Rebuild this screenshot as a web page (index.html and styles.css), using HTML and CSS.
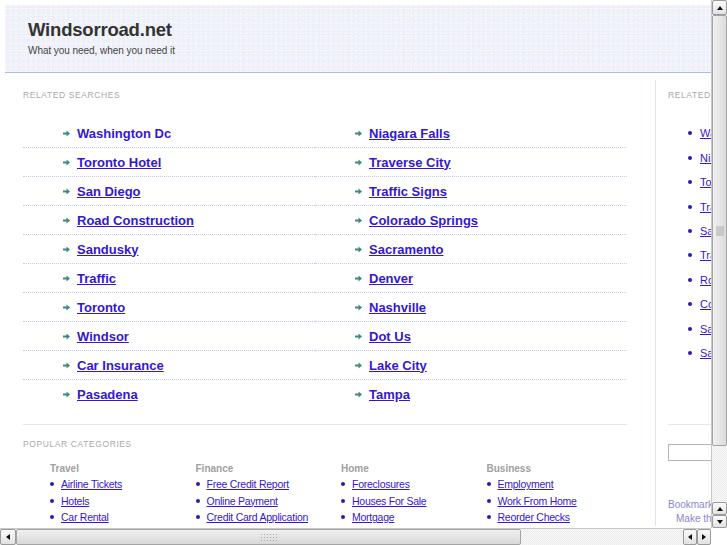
FILE: index.html
```html
<!DOCTYPE html>
<html>
<head>
<meta charset="utf-8">
<title>Windsorroad.net</title>
<link rel="stylesheet" href="styles.css">
</head>
<body>
<div class="window">
  <div class="viewport">
    <div class="page">
      <div class="header">
        <div class="title">Windsorroad.net</div>
        <div class="tagline">What you need, when you need it</div>
      </div>
      <div class="content">
        <div class="main">
          <div class="section-title">RELATED SEARCHES</div>
          <div class="results">
            <div class="item"><span class="arrow"><svg width="7" height="7" viewBox="0 0 7 7"><path d="M0 2.5h3.5V0.5L7 3.5 3.5 6.5V4.5H0z" fill="#3b8a7c"/></svg></span><a class="hov">Washington Dc</a></div>
            <div class="item"><span class="arrow"><svg width="7" height="7" viewBox="0 0 7 7"><path d="M0 2.5h3.5V0.5L7 3.5 3.5 6.5V4.5H0z" fill="#3b8a7c"/></svg></span><a>Niagara Falls</a></div>
            <div class="item"><span class="arrow"><svg width="7" height="7" viewBox="0 0 7 7"><path d="M0 2.5h3.5V0.5L7 3.5 3.5 6.5V4.5H0z" fill="#3b8a7c"/></svg></span><a>Toronto Hotel</a></div>
            <div class="item"><span class="arrow"><svg width="7" height="7" viewBox="0 0 7 7"><path d="M0 2.5h3.5V0.5L7 3.5 3.5 6.5V4.5H0z" fill="#3b8a7c"/></svg></span><a>Traverse City</a></div>
            <div class="item"><span class="arrow"><svg width="7" height="7" viewBox="0 0 7 7"><path d="M0 2.5h3.5V0.5L7 3.5 3.5 6.5V4.5H0z" fill="#3b8a7c"/></svg></span><a>San Diego</a></div>
            <div class="item"><span class="arrow"><svg width="7" height="7" viewBox="0 0 7 7"><path d="M0 2.5h3.5V0.5L7 3.5 3.5 6.5V4.5H0z" fill="#3b8a7c"/></svg></span><a>Traffic Signs</a></div>
            <div class="item"><span class="arrow"><svg width="7" height="7" viewBox="0 0 7 7"><path d="M0 2.5h3.5V0.5L7 3.5 3.5 6.5V4.5H0z" fill="#3b8a7c"/></svg></span><a>Road Construction</a></div>
            <div class="item"><span class="arrow"><svg width="7" height="7" viewBox="0 0 7 7"><path d="M0 2.5h3.5V0.5L7 3.5 3.5 6.5V4.5H0z" fill="#3b8a7c"/></svg></span><a>Colorado Springs</a></div>
            <div class="item"><span class="arrow"><svg width="7" height="7" viewBox="0 0 7 7"><path d="M0 2.5h3.5V0.5L7 3.5 3.5 6.5V4.5H0z" fill="#3b8a7c"/></svg></span><a>Sandusky</a></div>
            <div class="item"><span class="arrow"><svg width="7" height="7" viewBox="0 0 7 7"><path d="M0 2.5h3.5V0.5L7 3.5 3.5 6.5V4.5H0z" fill="#3b8a7c"/></svg></span><a>Sacramento</a></div>
            <div class="item"><span class="arrow"><svg width="7" height="7" viewBox="0 0 7 7"><path d="M0 2.5h3.5V0.5L7 3.5 3.5 6.5V4.5H0z" fill="#3b8a7c"/></svg></span><a>Traffic</a></div>
            <div class="item"><span class="arrow"><svg width="7" height="7" viewBox="0 0 7 7"><path d="M0 2.5h3.5V0.5L7 3.5 3.5 6.5V4.5H0z" fill="#3b8a7c"/></svg></span><a>Denver</a></div>
            <div class="item"><span class="arrow"><svg width="7" height="7" viewBox="0 0 7 7"><path d="M0 2.5h3.5V0.5L7 3.5 3.5 6.5V4.5H0z" fill="#3b8a7c"/></svg></span><a>Toronto</a></div>
            <div class="item"><span class="arrow"><svg width="7" height="7" viewBox="0 0 7 7"><path d="M0 2.5h3.5V0.5L7 3.5 3.5 6.5V4.5H0z" fill="#3b8a7c"/></svg></span><a>Nashville</a></div>
            <div class="item"><span class="arrow"><svg width="7" height="7" viewBox="0 0 7 7"><path d="M0 2.5h3.5V0.5L7 3.5 3.5 6.5V4.5H0z" fill="#3b8a7c"/></svg></span><a>Windsor</a></div>
            <div class="item"><span class="arrow"><svg width="7" height="7" viewBox="0 0 7 7"><path d="M0 2.5h3.5V0.5L7 3.5 3.5 6.5V4.5H0z" fill="#3b8a7c"/></svg></span><a>Dot Us</a></div>
            <div class="item"><span class="arrow"><svg width="7" height="7" viewBox="0 0 7 7"><path d="M0 2.5h3.5V0.5L7 3.5 3.5 6.5V4.5H0z" fill="#3b8a7c"/></svg></span><a>Car Insurance</a></div>
            <div class="item"><span class="arrow"><svg width="7" height="7" viewBox="0 0 7 7"><path d="M0 2.5h3.5V0.5L7 3.5 3.5 6.5V4.5H0z" fill="#3b8a7c"/></svg></span><a>Lake City</a></div>
            <div class="item last"><span class="arrow"><svg width="7" height="7" viewBox="0 0 7 7"><path d="M0 2.5h3.5V0.5L7 3.5 3.5 6.5V4.5H0z" fill="#3b8a7c"/></svg></span><a>Pasadena</a></div>
            <div class="item last"><span class="arrow"><svg width="7" height="7" viewBox="0 0 7 7"><path d="M0 2.5h3.5V0.5L7 3.5 3.5 6.5V4.5H0z" fill="#3b8a7c"/></svg></span><a>Tampa</a></div>
          </div>
          <div class="rule"></div>
          <div class="section-title popular">POPULAR CATEGORIES</div>
          <div class="cats">
            <div class="cat">
              <div class="cat-title">Travel</div>
              <ul class="dots">
                <li><a>Airline Tickets</a></li>
                <li><a>Hotels</a></li>
                <li><a>Car Rental</a></li>
              </ul>
            </div>
            <div class="cat">
              <div class="cat-title">Finance</div>
              <ul class="dots">
                <li><a>Free Credit Report</a></li>
                <li><a>Online Payment</a></li>
                <li><a>Credit Card Application</a></li>
              </ul>
            </div>
            <div class="cat">
              <div class="cat-title">Home</div>
              <ul class="dots">
                <li><a>Foreclosures</a></li>
                <li><a>Houses For Sale</a></li>
                <li><a>Mortgage</a></li>
              </ul>
            </div>
            <div class="cat">
              <div class="cat-title">Business</div>
              <ul class="dots">
                <li><a>Employment</a></li>
                <li><a>Work From Home</a></li>
                <li><a>Reorder Checks</a></li>
              </ul>
            </div>
          </div>
        </div>
        <div class="side">
          <div class="section-title">RELATED SEARCHES</div>
          <ul class="side-list">
            <li><a>Washington Dc</a></li>
            <li><a>Niagara Falls</a></li>
            <li><a>Toronto Hotel</a></li>
            <li><a>Traverse City</a></li>
            <li><a>San Diego</a></li>
            <li><a>Traffic Signs</a></li>
            <li><a>Road Construction</a></li>
            <li><a>Colorado Springs</a></li>
            <li><a>Sandusky</a></li>
            <li><a>Sacramento</a></li>
          </ul>
          <div class="side-rule"></div>
          <input class="search" type="text">
          <div class="bookmark first">Bookmark this page</div>
          <div class="bookmark indent">Make this your homepage</div>
        </div>
      </div>
    </div>
  </div>
  <div class="vscroll">
    <div class="btn up top"></div>
    <div class="vthumb"><span class="grip"></span></div>
    <div class="trough"></div>
    <div class="btn up"></div>
    <div class="btn down"></div>
  </div>
  <div class="hscroll">
    <div class="btn left first"></div>
    <div class="hthumb"><span class="hgrip"></span></div>
    <div class="trough"></div>
    <div class="btn left"></div>
    <div class="btn right"></div>
  </div>
  <div class="corner"></div>
</div>
</body>
</html>
```
FILE: styles.css
```css
html, body {
  margin: 0;
  padding: 0;
  background: #ffffff;
}

body {
  font-family: "Liberation Sans", Arial, sans-serif;
  overflow: hidden;
}

.window {
  width: 727px;
  height: 545px;
  display: grid;
  grid-template-columns: 711px 16px;
  grid-template-rows: 528px 17px;
}

.viewport {
  overflow: hidden;
  background: #fff;
}

.page {
  width: 900px;
  padding: 5px 0 0 5px;
}

.header {
  height: 68px;
  box-sizing: border-box;
  padding: 14px 0 0 23px;
  background-color: #edf0f8;
  background-image:
    radial-gradient(circle at 20% 30%, rgba(255,255,255,0.7) 0.5px, transparent 0.9px),
    radial-gradient(circle at 60% 70%, rgba(255,255,255,0.6) 0.5px, transparent 0.9px),
    radial-gradient(circle at 40% 50%, rgba(255,255,255,0.6) 0.5px, transparent 0.9px);
  background-size: 5px 3px, 7px 5px, 3px 7px;
  border-bottom: 1px solid #a9bde8;
}

.title {
  font-size: 18.5px;
  font-weight: bold;
  line-height: 22px;
  color: #333333;
  letter-spacing: -0.2px;
}

.tagline {
  margin-top: 3px;
  font-size: 10px;
  line-height: 14px;
  color: #444444;
  letter-spacing: -0.05px;
}

.content {
  display: flex;
  margin-top: 7px;
}

.main {
  width: 650px;
  box-sizing: border-box;
  padding: 9px 28px 0 18px;
  flex: none;
}

.section-title {
  font-size: 8.5px;
  line-height: 12px;
  letter-spacing: 0.6px;
  color: #a8a8a8;
}

.results {
  display: grid;
  grid-template-columns: 292px 312px;
  margin-top: 18px;
}

.item {
  height: 28px;
  display: flex;
  align-items: center;
  padding-left: 40px;
  border-bottom: 1px dotted #c3d0ec;
}

.item.last {
  border-bottom: none;
}

.arrow {
  width: 7px;
  height: 7px;
  display: flex;
  margin-right: 7px;
}

a {
  color: #3318d0;
  text-decoration: underline;
}

.item a {
  font-size: 13px;
  font-weight: bold;
  letter-spacing: 0;
}

.item a.hov {
  text-decoration: none;
}

.rule {
  height: 1px;
  background: #e4e6f0;
  margin-top: 16px;
}

.popular {
  margin-top: 13px;
}

.cats {
  display: grid;
  grid-template-columns: repeat(4, 145.5px);
  padding-left: 27px;
  margin-top: 13px;
}

.cat-title {
  font-size: 10px;
  font-weight: bold;
  line-height: 12px;
  color: #a0a0a0;
}

.dots {
  list-style: none;
  margin: 1px 0 0 0;
  padding: 0;
}

.dots li {
  height: 16.5px;
  display: flex;
  align-items: center;
}

.dots li::before,
.side-list li::before {
  content: "";
  width: 4px;
  height: 4px;
  border-radius: 50%;
  background: #2a1ab8;
  flex: none;
}

.dots li::before {
  margin-right: 7px;
}

.dots a {
  font-size: 10.5px;
  letter-spacing: -0.25px;
}

.side {
  flex: none;
  width: 220px;
  border-left: 1px solid #dde4f4;
  padding: 9px 0 0 12px;
}

.side-list {
  list-style: none;
  margin: 20px 0 0 0;
  padding: 0 0 0 20px;
}

.side-list li {
  height: 24.45px;
  display: flex;
  align-items: center;
}

.side-list li::before {
  margin-right: 8px;
}

.side-list a {
  font-size: 11px;
}

.side-rule {
  height: 1px;
  background: #e4e6f0;
  margin-top: 59px;
}

.search {
  display: block;
  margin-top: 19px;
  width: 120px;
  height: 17px;
  box-sizing: border-box;
  border: 1px solid #b4b4b4;
  padding: 0;
}

.bookmark {
  font-size: 10px;
  line-height: 14px;
  color: #8a86d0;
}

.bookmark.first {
  margin-top: 37px;
}

.bookmark.indent {
  padding-left: 8px;
}

/* Scrollbars */
.vscroll {
  display: flex;
  flex-direction: column;
  background: #f2f2f2;
  border-left: 1px solid #c8c8c8;
  box-sizing: border-box;
}

.hscroll {
  display: flex;
  background: #f2f2f2;
  border-top: 1px solid #c8c8c8;
  box-sizing: border-box;
}

.corner {
  background: #ffffff;
}

.trough {
  flex: 1;
  background-color: #ececec;
  background-image:
    linear-gradient(45deg, #f8f8f8 25%, transparent 25%, transparent 75%, #f8f8f8 75%),
    linear-gradient(45deg, #f8f8f8 25%, transparent 25%, transparent 75%, #f8f8f8 75%);
  background-size: 2px 2px;
  background-position: 0 0, 1px 1px;
}

.btn {
  flex: none;
  box-sizing: border-box;
  border: 1px solid #9a9a9a;
  border-radius: 2px;
  background: linear-gradient(#fbfbfb, #e2e2e2);
  display: flex;
  align-items: center;
  justify-content: center;
}

.vscroll .btn {
  height: 13px;
  width: 15px;
}

.vscroll .btn.top {
  height: 15px;
}

.hscroll .btn {
  width: 14px;
  height: 16px;
}

.hscroll .btn.first {
  width: 16px;
}

.btn::after {
  content: "";
  width: 0;
  height: 0;
}

.btn.up::after {
  border-left: 3px solid transparent;
  border-right: 3px solid transparent;
  border-bottom: 4px solid #111;
}

.btn.down::after {
  border-left: 3px solid transparent;
  border-right: 3px solid transparent;
  border-top: 4px solid #111;
}

.btn.left::after {
  border-top: 3px solid transparent;
  border-bottom: 3px solid transparent;
  border-right: 4px solid #111;
}

.btn.right::after {
  border-top: 3px solid transparent;
  border-bottom: 3px solid transparent;
  border-left: 4px solid #111;
}

.vthumb {
  flex: none;
  height: 431px;
  box-sizing: border-box;
  border: 1px solid #a4a4a4;
  border-radius: 2px;
  background: linear-gradient(90deg, #f0f0f0, #dcdcdc);
  display: flex;
  justify-content: center;
  align-items: center;
}

.grip {
  width: 8px;
  height: 10px;
  background-image: radial-gradient(circle, #a8a8a8 0.6px, transparent 0.8px);
  background-size: 2px 2px;
}

.hthumb {
  flex: none;
  width: 505px;
  box-sizing: border-box;
  border: 1px solid #a4a4a4;
  border-radius: 2px;
  background: linear-gradient(#f0f0f0, #d8d8d8);
  display: flex;
  justify-content: center;
  align-items: center;
}

.hgrip {
  width: 18px;
  height: 8px;
  background-image: radial-gradient(circle, #a8a8a8 0.6px, transparent 0.8px);
  background-size: 3px 3px;
}
```
